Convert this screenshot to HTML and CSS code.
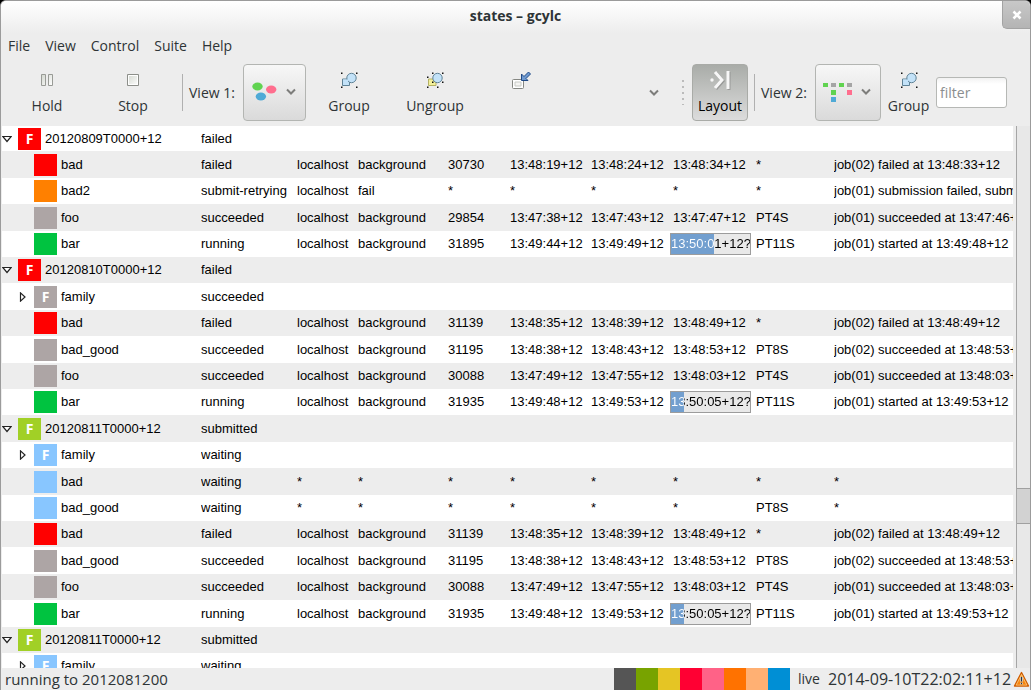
FILE: index.html
```html
<!DOCTYPE html>
<html lang="en">
<head>
<meta charset="utf-8">
<title>states – gcylc</title>
<link rel="stylesheet" href="styles.css">
</head>
<body>
<svg class="defs" aria-hidden="true">
  <defs>
    <linearGradient id="metal" x1="0" y1="0" x2="1" y2="1"><stop offset="0" stop-color="#d3d7cf"/><stop offset="1" stop-color="#fff"/></linearGradient>
    <linearGradient id="amber" x1="0" y1="0" x2="0" y2="1"><stop offset="0" stop-color="#fcaf3e"/><stop offset="1" stop-color="#f57900"/></linearGradient>
    <symbol id="group" viewBox="0 0 18 17">
      <path d="M2.5 7.5h7v6.500h-7z" fill="#c3e2f8" stroke="#5f8296"/>
      <circle cx="11.500" cy="6.500" r="4.700" fill="#c3e2f8" stroke="#5f8296"/>
      <path d="M3 8h5v5.500H3z" fill="#c3e2f8"/>
      <path d="M1 1h1.500v1.500H1zM16 1h1.500v1.500H16zM1 15h1.500v1.500H1zM16 15h1.500v1.500H16z" fill="#111"/>
    </symbol>
    <symbol id="open" viewBox="0 0 10 10"><path d="M.8 2.500h8.400L5 7.500z" fill="#fff" stroke="#222" stroke-width="1.200"/></symbol>
    <symbol id="closed" viewBox="0 0 10 10"><path d="M2.500.9v8.200L7 5z" fill="#fff" stroke="#222" stroke-width="1.200"/></symbol>
    <symbol id="chevron" viewBox="0 0 10 8"><path d="M1 1.500l4 4 4-4" fill="none" stroke="#7d7d7b" stroke-width="2"/></symbol>
  </defs>
</svg>
<div class="window">
  <header class="titlebar">
    <h1 class="title">states – gcylc</h1>
    <button class="close" aria-label="Close"><svg width="10" height="10" viewBox="0 0 10 10"><path d="M1.500 1.500l7 7M8.500 1.500l-7 7" stroke="#fff" stroke-width="2.600"/></svg></button>
  </header>
  <nav class="menubar">
    <button>File</button><button>View</button><button>Control</button><button>Suite</button><button>Help</button>
  </nav>
  <div class="toolbar">
    <button class="tool"><svg width="18" height="18" viewBox="0 0 18 18"><path d="M3.500 3.500h4v11h-4zM10.500 3.500h4v11h-4z" fill="url(#metal)" stroke="#999b96"/></svg><span>Hold</span></button>
    <button class="tool"><svg width="18" height="18" viewBox="0 0 18 18"><path d="M3.500 3.500h11v11h-11z" fill="url(#metal)" stroke="#8d8f8a"/><path d="M4.500 4.500h9v9h-9z" fill="none" stroke="#fff"/></svg><span>Stop</span></button>
    <span class="rule"></span>
    <span class="label">View 1:</span>
    <button class="combo" aria-label="View 1 type" aria-haspopup="listbox">
      <svg width="26" height="20" viewBox="0 0 26 20"><ellipse cx="5.500" cy="4.500" rx="5.200" ry="4" fill="#60d350"/><ellipse cx="19.200" cy="7.500" rx="5.200" ry="4" fill="#ff6e8e"/><ellipse cx="8.900" cy="14.500" rx="5.200" ry="4" fill="#4faad6"/></svg>
      <svg width="10" height="8"><use href="#chevron"/></svg>
    </button>
    <button class="tool"><svg width="18" height="18"><use href="#group"/></svg><span>Group</span></button>
    <button class="tool"><svg width="18" height="18" viewBox="0 0 18 17"><path d="M2.500 7.500h7.500V14H2.500z" fill="#f3f09a" stroke="#b5b264"/><circle cx="11.500" cy="6.500" r="4.700" fill="#c3e2f8" stroke="#5f8296"/><path d="M6 1h1.500v1.500H6zM16 1h1.500v1.500H16zM1 5h1.500v1.500H1zM6 10h1.500v1.500H6zM16 10h1.500v1.500H16zM1 15h1.500v1.500H1zM11 15h1.500v1.500H11z" fill="#111"/></svg><span>Ungroup</span></button>
    <button class="tool icon-only" aria-label="Detach view"><svg width="20" height="20" viewBox="0 0 20 20"><rect x="1.500" y="8.500" width="11" height="9" rx="1" fill="#fff" stroke="#858782"/><path d="M4 11h6v4H4z" fill="#f4f4f2" stroke="#c8cac5"/><path d="M17.500 1l2 2-4.500 4.500 2 2h-6.500V3l2.500 2.500z" fill="#6f9ad0" stroke="#204a87"/></svg></button>
    <button class="more" aria-label="More tools"><svg width="10" height="8"><use href="#chevron"/></svg></button>
    <span class="grip"></span>
    <button class="layout" aria-pressed="true"><svg width="22" height="22" viewBox="0 0 22 22"><path d="M7 4l7 8-7 8M20 3v18" fill="none" stroke="#777" stroke-width="3" opacity=".5"/><path d="M6 3l7 8-7 8M19 2v18" fill="none" stroke="#f7f7f7" stroke-width="3"/><circle cx="3" cy="11" r="1.700" fill="#f7f7f7"/></svg><span>Layout</span></button>
    <span class="rule"></span>
    <span class="label">View 2:</span>
    <button class="combo wide" aria-label="View 2 type" aria-haspopup="listbox">
      <svg width="30" height="20" viewBox="0 0 30 20"><path d="M1 1h5v4H1zM17 1h5v4h-5zM9 8h5v5H9z" fill="#60d350"/><path d="M9 1h5v4H9zM25 1h5v4h-5z" fill="#a5a5a5"/><path d="M25 8h5v5h-5z" fill="#ff6e8e"/><path d="M9 15h5v5H9z" fill="#4faad6"/></svg>
      <svg width="10" height="8"><use href="#chevron"/></svg>
    </button>
    <button class="tool narrow"><svg width="18" height="18"><use href="#group"/></svg><span>Group</span></button>
    <input class="filter" type="text" placeholder="filter" aria-label="filter">
  </div>
  <main class="view">
    <div class="tree">
      <table>
        <colgroup><col class="c-task"><col class="c-state"><col class="c-host"><col class="c-method"><col class="c-id"><col class="c-submit"><col class="c-start"><col class="c-finish"><col class="c-mean"><col></colgroup>
        <tbody>
          <tr><td><div class="node"><svg class="exp"><use href="#open"/></svg><i class="sw failed">F</i>20120809T0000+12</div></td><td>failed</td><td colspan="8"></td></tr>
          <tr><td><div class="node leaf"><i class="sw failed"></i>bad</div></td><td>failed</td><td>localhost</td><td>background</td><td>30730</td><td>13:48:19+12</td><td>13:48:24+12</td><td>13:48:34+12</td><td>*</td><td>job(02) failed at 13:48:33+12</td></tr>
          <tr><td><div class="node leaf"><i class="sw retrying"></i>bad2</div></td><td>submit-retrying</td><td>localhost</td><td>fail</td><td>*</td><td>*</td><td>*</td><td>*</td><td>*</td><td>job(01) submission failed, submit-retrying</td></tr>
          <tr><td><div class="node leaf"><i class="sw succeeded"></i>foo</div></td><td>succeeded</td><td>localhost</td><td>background</td><td>29854</td><td>13:47:38+12</td><td>13:47:43+12</td><td>13:47:47+12</td><td>PT4S</td><td>job(01) succeeded at 13:47:46+12</td></tr>
          <tr><td><div class="node leaf"><i class="sw running"></i>bar</div></td><td>running</td><td>localhost</td><td>background</td><td>31895</td><td>13:49:44+12</td><td>13:49:49+12</td><td class="bar"><div class="progress" style="--done:55%"><span>13:50:01+12?</span></div></td><td>PT11S</td><td>job(01) started at 13:49:48+12</td></tr>
          <tr><td><div class="node"><svg class="exp"><use href="#open"/></svg><i class="sw failed">F</i>20120810T0000+12</div></td><td>failed</td><td colspan="8"></td></tr>
          <tr><td><div class="node child"><svg class="exp"><use href="#closed"/></svg><i class="sw succeeded">F</i>family</div></td><td>succeeded</td><td colspan="8"></td></tr>
          <tr><td><div class="node leaf"><i class="sw failed"></i>bad</div></td><td>failed</td><td>localhost</td><td>background</td><td>31139</td><td>13:48:35+12</td><td>13:48:39+12</td><td>13:48:49+12</td><td>*</td><td>job(02) failed at 13:48:49+12</td></tr>
          <tr><td><div class="node leaf"><i class="sw succeeded"></i>bad_good</div></td><td>succeeded</td><td>localhost</td><td>background</td><td>31195</td><td>13:48:38+12</td><td>13:48:43+12</td><td>13:48:53+12</td><td>PT8S</td><td>job(02) succeeded at 13:48:53+12</td></tr>
          <tr><td><div class="node leaf"><i class="sw succeeded"></i>foo</div></td><td>succeeded</td><td>localhost</td><td>background</td><td>30088</td><td>13:47:49+12</td><td>13:47:55+12</td><td>13:48:03+12</td><td>PT4S</td><td>job(01) succeeded at 13:48:03+12</td></tr>
          <tr><td><div class="node leaf"><i class="sw running"></i>bar</div></td><td>running</td><td>localhost</td><td>background</td><td>31935</td><td>13:49:48+12</td><td>13:49:53+12</td><td class="bar"><div class="progress" style="--done:16%"><span>13:50:05+12?</span></div></td><td>PT11S</td><td>job(01) started at 13:49:53+12</td></tr>
          <tr><td><div class="node"><svg class="exp"><use href="#open"/></svg><i class="sw submitted">F</i>20120811T0000+12</div></td><td>submitted</td><td colspan="8"></td></tr>
          <tr><td><div class="node child"><svg class="exp"><use href="#closed"/></svg><i class="sw waiting">F</i>family</div></td><td>waiting</td><td colspan="8"></td></tr>
          <tr><td><div class="node leaf"><i class="sw waiting"></i>bad</div></td><td>waiting</td><td>*</td><td>*</td><td>*</td><td>*</td><td>*</td><td>*</td><td>*</td><td>*</td></tr>
          <tr><td><div class="node leaf"><i class="sw waiting"></i>bad_good</div></td><td>waiting</td><td>*</td><td>*</td><td>*</td><td>*</td><td>*</td><td>*</td><td>PT8S</td><td>*</td></tr>
          <tr><td><div class="node leaf"><i class="sw failed"></i>bad</div></td><td>failed</td><td>localhost</td><td>background</td><td>31139</td><td>13:48:35+12</td><td>13:48:39+12</td><td>13:48:49+12</td><td>*</td><td>job(02) failed at 13:48:49+12</td></tr>
          <tr><td><div class="node leaf"><i class="sw succeeded"></i>bad_good</div></td><td>succeeded</td><td>localhost</td><td>background</td><td>31195</td><td>13:48:38+12</td><td>13:48:43+12</td><td>13:48:53+12</td><td>PT8S</td><td>job(02) succeeded at 13:48:53+12</td></tr>
          <tr><td><div class="node leaf"><i class="sw succeeded"></i>foo</div></td><td>succeeded</td><td>localhost</td><td>background</td><td>30088</td><td>13:47:49+12</td><td>13:47:55+12</td><td>13:48:03+12</td><td>PT4S</td><td>job(01) succeeded at 13:48:03+12</td></tr>
          <tr><td><div class="node leaf"><i class="sw running"></i>bar</div></td><td>running</td><td>localhost</td><td>background</td><td>31935</td><td>13:49:48+12</td><td>13:49:53+12</td><td class="bar"><div class="progress" style="--done:16%"><span>13:50:05+12?</span></div></td><td>PT11S</td><td>job(01) started at 13:49:53+12</td></tr>
          <tr><td><div class="node"><svg class="exp"><use href="#open"/></svg><i class="sw submitted">F</i>20120811T0000+12</div></td><td>submitted</td><td colspan="8"></td></tr>
          <tr><td><div class="node child"><svg class="exp"><use href="#closed"/></svg><i class="sw waiting">F</i>family</div></td><td>waiting</td><td colspan="8"></td></tr>
        </tbody>
      </table>
    </div>
    <div class="scrollbar"><div class="thumb"></div></div>
  </main>
  <footer class="status">
    <span class="message">running to 2012081200</span>
    <div class="legend"><i class="k1"></i><i class="k2"></i><i class="k3"></i><i class="k4"></i><i class="k5"></i><i class="k6"></i><i class="k7"></i><i class="k8"></i></div>
    <span class="mode">live</span>
    <time class="clock">2014-09-10T22:02:11+12</time>
    <svg class="warning" width="17" height="17" viewBox="0 0 17 17"><path d="M8.500 1.500l7 13.500h-14z" fill="url(#amber)" stroke="#ce5c00" stroke-width="1.400" stroke-linejoin="round"/><path d="M8.500 3.500l5.400 10.600H3.100z" fill="none" stroke="#fcc982" stroke-width=".8"/><path d="M8.500 6v4.500M8.500 11.700v1.500" stroke="#fff" stroke-width="3"/><path d="M8.500 6v4.500M8.500 11.700v1.500" stroke="#333" stroke-width="1.600"/></svg>
  </footer>
</div>
</body>
</html>
```
FILE: styles.css
```css
* { box-sizing: border-box; }
body { margin: 0; background: #000; font: 14px "Open Sans", "Noto Sans", sans-serif; color: #2e3436; }
button { font: inherit; color: inherit; background: none; border: 0; padding: 0; }
.defs { position: absolute; width: 0; height: 0; }

.window { display: flex; flex-direction: column; height: 100vh; overflow: hidden; background: #ededed; border: solid #9b9b9b; border-width: 1px 1px 0; border-radius: 6px 6px 0 0; }

.titlebar { display: grid; grid-template-columns: 30px 1fr 30px; align-items: start; height: 32px; flex: none; background: linear-gradient(#fff, #ededed); }
.title { grid-column: 2; margin: 0; text-align: center; font-size: 14px; font-weight: 700; line-height: 30px; }
.close { display: flex; align-items: center; justify-content: center; width: 28px; height: 28px; justify-self: end; background: linear-gradient(#c8c8c8, #b4b4b4); border: solid #a3a3a3; border-width: 0 0 1px 1px; border-bottom-left-radius: 5px; }

.menubar { display: flex; gap: 15px; flex: none; height: 24px; padding: 0 7px; align-items: center; }

.toolbar { display: flex; align-items: center; flex: none; height: 69px; padding: 2px 23px 0 3px; }
.tool { display: flex; flex-direction: column; align-items: center; width: 86px; flex: none; gap: 8px; line-height: 18px; }
.tool.icon-only { align-self: flex-start; padding-top: 12px; }
.tool.narrow { width: 39px; margin: 0 8px; }
.rule { width: 1px; height: 37px; margin: 0 6px; flex: none; background: #b0b0b0; }
.label { width: 54px; flex: none; white-space: nowrap; }
.combo { display: flex; align-items: center; justify-content: space-between; width: 63px; height: 57px; flex: none; padding: 0 9px 2px 8px; border: 1px solid #b3b5b2; border-radius: 4px; background: linear-gradient(#f7f7f7, #dadada); }
.combo.wide { width: 66px; padding: 0 9px 2px 6px; }
.more { margin-left: auto; display: flex; flex: none; }
.grip { width: 2px; height: 25px; margin: 0 8px 0 23px; flex: none; background: repeating-linear-gradient(#bbb 0 2px, transparent 2px 6px); }
.layout { display: flex; flex-direction: column; align-items: center; width: 56px; height: 57px; flex: none; padding-top: 4px; gap: 6px; line-height: 18px; color: #000; border: 1px solid #a9aba7; border-radius: 4px; background: linear-gradient(#a9aca8, #dcdcdc); }
.filter { width: 71px; height: 31px; flex: none; padding: 0 3px; font: inherit; background: linear-gradient(#f2f2f2, #fff 6px); border: 1px solid #b6b8b5; border-radius: 3px; }
.filter::placeholder { color: #8b8e8f; opacity: 1; }

.view { display: flex; flex: 1; min-height: 0; }
.tree { flex: 1; min-width: 0; overflow: hidden; margin: 0 3px 0 1px; background: #fff; font: 13px "Liberation Sans", Arial, sans-serif; color: #000; }
table { width: 100%; table-layout: fixed; border-collapse: collapse; }
tr { height: 26px; }
tr:first-child { height: 25px; }
tr:nth-child(5n+2), tr:nth-child(5n+4) { height: 27px; }
tr:nth-child(even) { background: #ededed; }
td { padding: 0; line-height: 22px; white-space: nowrap; overflow: hidden; }
td.bar { overflow: visible; }
.c-task { width: 199px; }
.c-state { width: 96px; }
.c-host { width: 61px; }
.c-method { width: 90px; }
.c-id { width: 62px; }
.c-submit { width: 81px; }
.c-start { width: 82px; }
.c-finish { width: 83px; }
.c-mean { width: 78px; }
.node { display: flex; align-items: center; }
.node.child { padding-left: 16px; }
.node.leaf { padding-left: 32px; }
.exp { width: 10px; height: 10px; margin-right: 6px; }
.sw { display: block; width: 23px; height: 22px; margin-right: 4px; text-align: center; color: #fff; font: bold 14px/22px "Open Sans", sans-serif; }
.failed { background: #f00; }
.retrying { background: #ff8000; }
.succeeded { background: #ada5a5; }
.running { background: #00c340; }
.submitted { background: #a1d026; }
.waiting { background: #88c6ff; }
.progress { width: 81px; height: 22px; margin-left: -3px; line-height: 20px; border: 1px solid #9c9c9c; background: linear-gradient(to right, #729fcf var(--done), #e9e9e9 var(--done)); }
.progress span { display: block; color: transparent; background: linear-gradient(to right, #fff var(--done), #000 var(--done)); background-clip: text; -webkit-background-clip: text; }

.scrollbar { display: flex; flex-direction: column; width: 14px; flex: none; background: #e8e8e8; border-left: 1px solid #a6a6a6; }
.thumb { height: 36px; margin-top: 362px; flex: none; background: #d2d2d2; border: solid #a0a0a0; border-width: 1px 0; }

.status { display: flex; align-items: center; height: 22px; flex: none; padding-left: 4px; font-size: 15px; line-height: 22px; }
.message { flex: 1; }
.legend { display: flex; margin-right: 8px; }
.legend i { width: 22px; height: 22px; }
.k1 { background: #555; }
.k2 { background: #78a300; }
.k3 { background: #e5c524; }
.k4 { background: #ff0033; }
.k5 { background: #ff6287; }
.k6 { background: #ff7200; }
.k7 { background: #ffb073; }
.k8 { background: #008fd5; }
.mode { width: 30px; font-size: 14px; }
.clock { width: 185px; font-size: 16px; }
```
